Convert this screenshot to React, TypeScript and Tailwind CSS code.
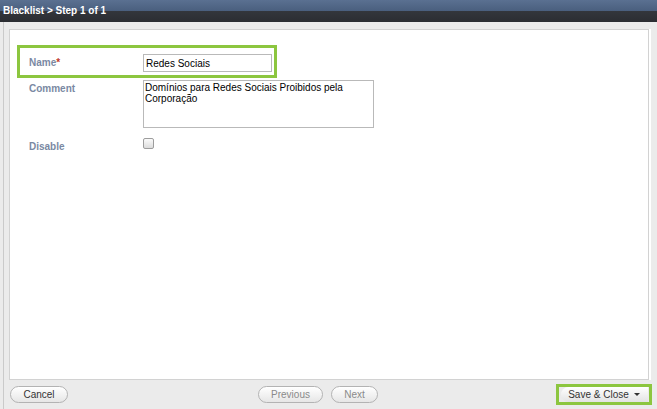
const font = { fontFamily: '"Liberation Sans", Arial, sans-serif' }

function PillButton({ label, disabled, className }: { label: string; disabled?: boolean; className?: string }) {
  return (
    <button
      className={`h-[17px] rounded-full border border-[#b3b3b3] bg-[linear-gradient(#ffffff,#e6e6e6)] text-[10px] leading-none shadow-[inset_0_1px_0_#fff] ${
        disabled ? "text-[#8a8a8a]" : "text-[#333]"
      } ${className ?? ""}`}
    >
      {label}
    </button>
  )
}

export default function App() {
  return (
    <div style={font} className="w-[657px] h-[409px] overflow-hidden bg-[#ebebeb] flex flex-col">
      {/* header */}
      <div className="h-[22px] shrink-0 bg-[linear-gradient(#5a7091_0%,#4a5f7e_50%,#33363c_50%,#2b2d32_100%)] flex items-start pl-[3px] pt-[6px]">
        <span className="text-white text-[10px] font-bold leading-none">Blacklist &gt; Step 1 of 1</span>
      </div>

      <div className="flex-1 flex flex-col pl-[3px]">
        <div className="flex-1 flex flex-col border-l border-[#cacaca] pl-[5px] pr-[4px] pt-[7px]">
          <div className="flex-1 flex">
            {/* panel */}
            <div className="flex-1 bg-white border border-[#d2d2d2] flex flex-col">
              <div className="ml-[7px] mt-[15px] w-[260px] h-[33px] border-[3px] border-[#8cc63f] flex items-center pl-[9px]">
                <div className="w-[114px] pt-[1px] text-[10px] font-bold text-[#7a89a3]">
                  Name<span className="text-[#c0392b]">*</span>
                </div>
                <input
                  readOnly
                  value="Redes Sociais"
                  className="mt-[3px] w-[129px] h-[18px] border border-[#b9b9b9] px-[2px] text-[10px] text-black outline-none"
                />
              </div>

              <div className="flex ml-[19px] mt-[2px]">
                <div className="w-[114px] pt-[1px] text-[10px] font-bold text-[#7a89a3]">Comment</div>
                <div className="w-[231px] h-[48px] border border-[#b9b9b9] px-[1px] pt-[1px] text-[10px] leading-[11px] text-black">
                  Domínios para Redes Sociais Proibidos pela Corporação
                </div>
              </div>

              <div className="flex items-start ml-[19px] mt-[10px]">
                <div className="w-[114px] pt-[1px] text-[10px] font-bold text-[#7a89a3]">Disable</div>
                <div className="w-[11px] h-[11px] rounded-[2px] border border-[#9d9d9d] bg-[linear-gradient(#fbfbfb,#dcdcdc)]" />
              </div>
            </div>
            <div className="w-[4px] border-l-[2px] border-white" />
          </div>

          {/* footer */}
          <div className="h-[29px] shrink-0 flex items-center pr-[4px]">
            <PillButton label="Cancel" className="w-[58px] ml-[1px]" />
            <div className="flex-1 flex justify-center gap-[8px] pl-[12px]">
              <PillButton label="Previous" disabled className="w-[65px]" />
              <PillButton label="Next" disabled className="w-[47px]" />
            </div>
            <div className="w-[96px] h-[21px] border-[3px] border-[#8cc63f] flex items-center justify-center mr-[-3px]">
              <button className="h-[15px] w-[87px] rounded-l-full bg-[linear-gradient(#ffffff,#e3e3e3)] text-[10px] leading-none text-[#333] flex items-center justify-center gap-[5px]">
                Save &amp; Close
                <span className="w-0 h-0 border-l-[3px] border-r-[3px] border-t-[3px] border-l-transparent border-r-transparent border-t-[#333]" />
              </button>
            </div>
          </div>
        </div>
      </div>
    </div>
  )
}
